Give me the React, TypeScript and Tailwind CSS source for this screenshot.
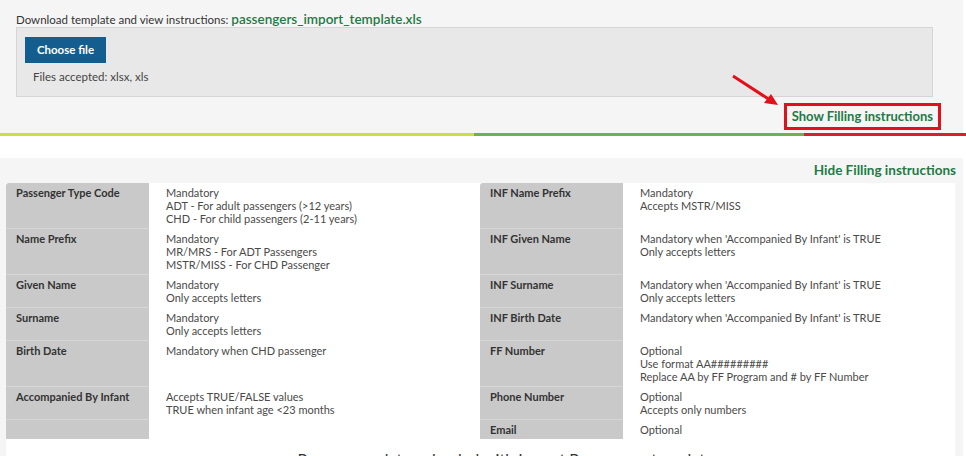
import React from 'react';

type Rule = {
    label: string;
    lines: string[];
};

const leftRules: Rule[] = [
    { label: 'Passenger Type Code', lines: ['Mandatory', 'ADT - For adult passengers (>12 years)', 'CHD - For child passengers (2-11 years)'] },
    { label: 'Name Prefix', lines: ['Mandatory', 'MR/MRS - For ADT Passengers', 'MSTR/MISS - For CHD Passenger'] },
    { label: 'Given Name', lines: ['Mandatory', 'Only accepts letters'] },
    { label: 'Surname', lines: ['Mandatory', 'Only accepts letters'] },
    { label: 'Birth Date', lines: ['Mandatory when CHD passenger'] },
    { label: 'Accompanied By Infant', lines: ['Accepts TRUE/FALSE values', 'TRUE when infant age <23 months'] },
    { label: '', lines: [] },
];

const rightRules: Rule[] = [
    { label: 'INF Name Prefix', lines: ['Mandatory', 'Accepts MSTR/MISS'] },
    { label: 'INF Given Name', lines: ["Mandatory when 'Accompanied By Infant' is TRUE", 'Only accepts letters'] },
    { label: 'INF Surname', lines: ["Mandatory when 'Accompanied By Infant' is TRUE", 'Only accepts letters'] },
    { label: 'INF Birth Date', lines: ["Mandatory when 'Accompanied By Infant' is TRUE"] },
    { label: 'FF Number', lines: ['Optional', 'Use format AA#########', 'Replace AA by FF Program and # by FF Number'] },
    { label: 'Phone Number', lines: ['Optional', 'Accepts only numbers'] },
    { label: 'Email', lines: ['Optional'] },
];

function Cells({ rule, first }: { rule: Rule; first: boolean }) {
    return (
        <>
            <div className={`bg-[#c9c9c9] pl-[10px] py-[3px] font-bold text-[#333] ${first ? 'rounded-tl-[3px]' : 'border-t border-[#d6d6d6]'}`}>
                {rule.label}
            </div>
            <div className={`pl-[17px] py-[3px] text-[#4a4a4a] ${first ? '' : 'border-t border-white'}`}>
                {rule.lines.map((l, i) => (
                    <div key={i}>{l}</div>
                ))}
            </div>
        </>
    );
}

export default function App() {
    return (
        <div className="w-[966px] h-[456px] overflow-hidden bg-white font-['Lato','Liberation_Sans',sans-serif] relative">
            <div className="w-[963px] h-[133px] bg-[#f5f5f5] pt-[12px] px-4">
                <div className="text-[11.5px] leading-[15px] text-[#333]">
                    Download template and view instructions:{' '}
                    <a className="text-[13.5px] font-semibold text-[#237a45]">passengers_import_template.xls</a>
                </div>
                <div className="w-[917px] h-[70px] bg-[#e8e8e8] border border-[#d5d5d5] pt-[8px] pl-[8px]">
                    <button className="w-[81px] h-[26px] bg-[#135e8f] text-white text-[11.5px] font-bold">Choose file</button>
                    <div className="text-[11.5px] text-[#444] pl-[8px] mt-[5px]">Files accepted: xlsx, xls</div>
                </div>
                <div className="flex justify-end pr-[6px] mt-[6px]">
                    <div className="border-[3px] border-[#e3101b] px-[5px] h-[27px] flex items-center text-[13px] font-bold text-[#237a45]">
                        Show Filling instructions
                    </div>
                </div>
            </div>
            <svg className="absolute left-[728px] top-[72px]" width="56" height="38" viewBox="0 0 56 38">
                <line x1="5" y1="4" x2="42" y2="28" stroke="#e3101b" strokeWidth="3" />
                <polygon points="50,33 36,31 43,22" fill="#e3101b" />
            </svg>
            <div className="flex h-[3px]">
                <div className="w-[474px] bg-[#c8df4a]" />
                <div className="w-[330px] bg-[#6fb14c]" />
                <div className="flex-1 bg-[#d7202e]" />
            </div>
            <div className="mt-[22px] w-[963px] h-[300px] bg-[#f5f5f5]">
                <div className="h-[25px] flex items-center justify-end pr-[7px] text-[13.5px] font-bold text-[#237a45]">
                    Hide Filling instructions
                </div>
                <div className="ml-[6px] w-[949px] bg-white h-[300px]">
                    <div className="grid grid-cols-[143px_331px_143px_332px] text-[11px] leading-[13px]">
                        {leftRules.map((r, i) => (
                            <React.Fragment key={i}>
                                <Cells rule={r} first={i === 0} />
                                <Cells rule={rightRules[i]} first={i === 0} />
                            </React.Fragment>
                        ))}
                    </div>
                    <div className="pt-[10px] pl-[50px] text-center text-[16px] leading-[20px] text-[#333]">
                        Passengers data uploaded with Import Passengers template
                    </div>
                </div>
            </div>
        </div>
    );
}
